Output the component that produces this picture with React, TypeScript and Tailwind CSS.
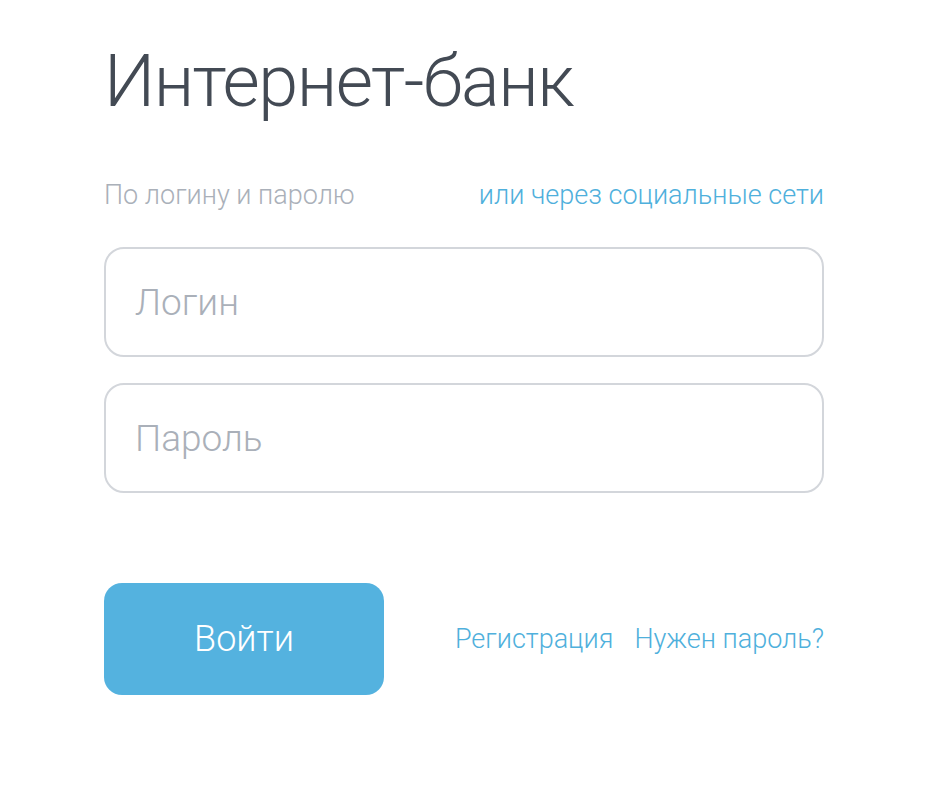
import React from 'react';

const font = { fontFamily: 'Roboto, "Noto Sans", sans-serif' };

export default function App() {
  return (
    <div className="min-h-screen bg-white" style={font}>
      <div className="w-[720px] ml-[104px] pt-[38px]">
        <h1 className="text-[72px] leading-[88px] font-light text-[#434a54] tracking-[-1.5px]">
          Интернет-банк
        </h1>

        <div className="mt-[51px] flex items-center justify-between text-[27px] leading-[36px] font-light">
          <span className="text-[#aab0b9]">По логину и паролю</span>
          <a href="#" className="text-[#4fb0dc]">или через социальные сети</a>
        </div>

        <form className="mt-[34px] flex flex-col gap-[26px]" onSubmit={(e) => e.preventDefault()}>
          <input
            type="text"
            placeholder="Логин"
            className="h-[110px] w-full rounded-[20px] border-2 border-[#d3d6db] px-[29px] text-[37px] font-light text-[#434a54] placeholder:text-[#aab0b9] outline-none"
          />
          <input
            type="password"
            placeholder="Пароль"
            className="h-[110px] w-full rounded-[20px] border-2 border-[#d3d6db] px-[29px] text-[37px] font-light text-[#434a54] placeholder:text-[#aab0b9] outline-none"
          />

          <div className="mt-[64px] flex items-center justify-between">
            <button
              type="submit"
              className="h-[112px] w-[280px] rounded-[18px] bg-[#54b2df] text-[36px] font-light text-white"
            >
              Войти
            </button>
            <div className="flex items-center gap-[21px] text-[27px] font-light text-[#4fb0dc]">
              <a href="#">Регистрация</a>
              <a href="#">Нужен пароль?</a>
            </div>
          </div>
        </form>
      </div>
    </div>
  );
}
